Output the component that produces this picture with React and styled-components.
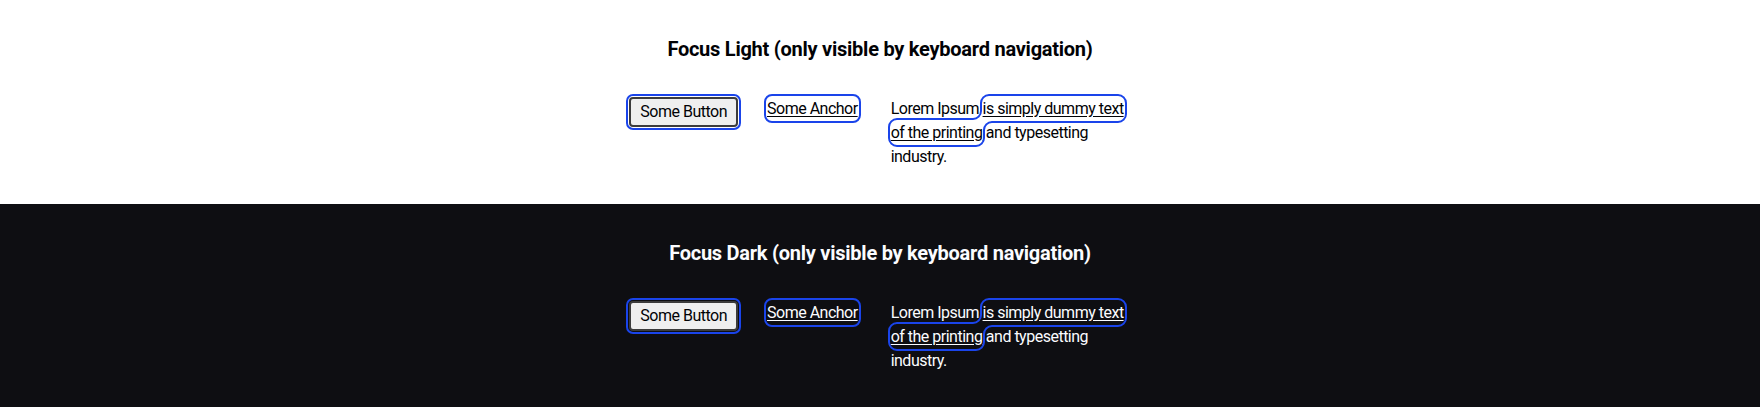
import React from "react";
import styled, { createGlobalStyle } from "styled-components";

const GlobalStyle = createGlobalStyle`
  html, body {
    margin: 0;
    padding: 0;
    background: #ffffff;
  }
  body {
    font-family: Roboto, "Liberation Sans", sans-serif;
  }
`;

const Section = styled.section`
  background: ${(p) => (p.$dark ? "#0e0e12" : "#ffffff")};
  color: ${(p) => (p.$dark ? "#fbfcff" : "#010205")};
  padding: 35px 0 0;
  height: 204px;
  box-sizing: border-box;
`;

const Heading = styled.h2`
  margin: 0 0 33px;
  font-size: 20px;
  line-height: 28px;
  font-weight: 700;
  letter-spacing: -0.25px;
  text-align: center;
`;

const Row = styled.div`
  display: flex;
  justify-content: center;
  align-items: flex-start;
  gap: 28px;
`;

const ring = `
  outline: 2px solid #1a44ea;
  border-radius: 6px;
`;

const Button = styled.button`
  font-family: inherit;
  font-size: 16px;
  line-height: 22px;
  letter-spacing: -0.5px;
  color: #010205;
  background: #efefef;
  border: 2px solid #3c3c3c;
  padding: 2px 9px;
  margin-top: 1px;
  ${ring}
  outline-offset: 1px;
  border-radius: 4px;
`;

const Anchor = styled.a`
  display: inline-block;
  font-size: 16px;
  line-height: 25px;
  letter-spacing: -0.5px;
  color: inherit;
  text-decoration: underline;
  text-underline-offset: 2px;
  padding: 0 1px;
  ${ring}
  outline-offset: 0px;
`;

const Text = styled.p`
  margin: 1px 0 0 4px;
  width: 240px;
  font-size: 16px;
  line-height: 24px;
  letter-spacing: -0.5px;
`;

const InlineLink = styled.a`
  color: inherit;
  text-decoration: underline;
  text-underline-offset: 2px;
  padding: 2px 0;
  ${ring}
  outline-offset: 1px;
`;

function FocusBlock({ dark, title }) {
  return (
    <Section $dark={dark}>
      <Heading>{title}</Heading>
      <Row>
        <Button>Some Button</Button>
        <Anchor href="#">Some Anchor</Anchor>
        <Text>
          Lorem Ipsum <InlineLink href="#">is simply dummy text of the printing</InlineLink> and
          typesetting industry.
        </Text>
      </Row>
    </Section>
  );
}

export default function App() {
  return (
    <>
      <GlobalStyle />
      <FocusBlock title="Focus Light (only visible by keyboard navigation)" />
      <FocusBlock dark title="Focus Dark (only visible by keyboard navigation)" />
    </>
  );
}
